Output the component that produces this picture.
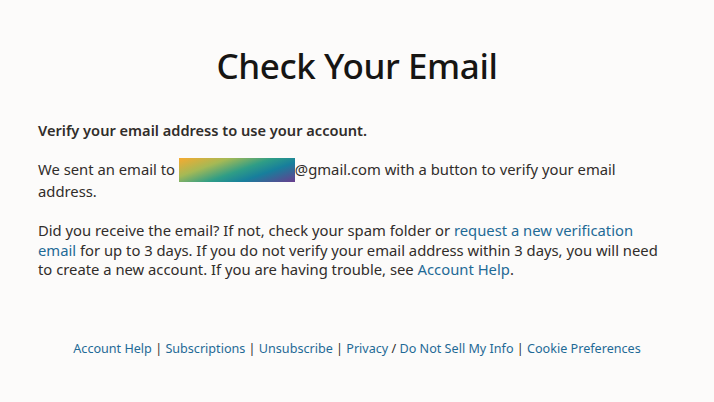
export default function App() {
  const font = { fontFamily: '"Noto Sans", "Open Sans", sans-serif' };
  return (
    <div className="w-[714px] h-[402px] bg-[#fcfbfa] text-[#312d2a] overflow-hidden" style={font}>
      <div className="pt-[40px]">
        <h1 className="text-center text-[35px] leading-[52px] font-medium text-[#161513] tracking-[-0.4px]">Check Your Email</h1>
        <div className="pl-[38px] pr-[54px]">
          <p className="mt-[28px] text-[14.6px] leading-[20px] font-semibold">Verify your email address to use your account.</p>
          <p className="mt-[20px] text-[14.8px] leading-[19.5px]">
            We sent an email to{' '}
            <span className="inline-block align-middle -mt-[3px] w-[116px] h-[24px] bg-[linear-gradient(160deg,#f7aa30_0%,#a5b955_28%,#2f9d86_52%,#177f9c_70%,#6a3d8f_100%)]" />
            @gmail.com with a button to verify your email address.
          </p>
          <p className="mt-[20px] text-[14.8px] leading-[19.5px]">
            Did you receive the email? If not, check your spam folder or{' '}
            <a className="text-[#1f6a96]">request a new verification email</a> for up to 3 days. If you do not verify your email address within 3 days, you will need to create a new account. If you are having trouble, see{' '}
            <a className="text-[#1f6a96]">Account Help</a>.
          </p>
        </div>
        <div className="mt-[60px] text-center text-[12.6px] leading-[18px] text-[#312d2a]">
          <a className="text-[#1f6a96]">Account Help</a> | <a className="text-[#1f6a96]">Subscriptions</a> | <a className="text-[#1f6a96]">Unsubscribe</a> | <a className="text-[#1f6a96]">Privacy</a> / <a className="text-[#1f6a96]">Do Not Sell My Info</a> | <a className="text-[#1f6a96]">Cookie Preferences</a>
        </div>
      </div>
    </div>
  );
}
